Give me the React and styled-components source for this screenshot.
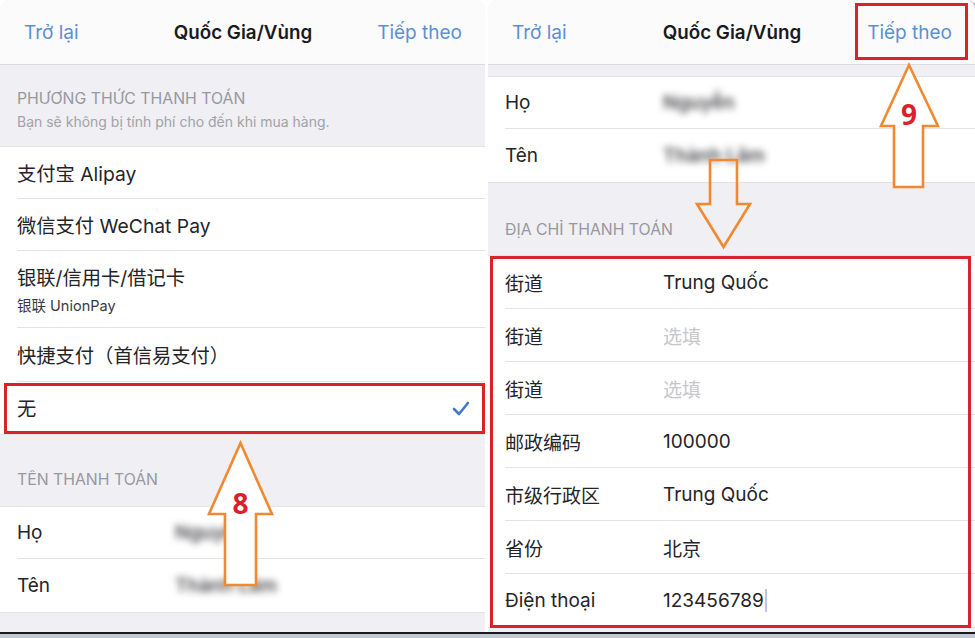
import React from 'react';
import styled, { createGlobalStyle, css } from 'styled-components';

const GlobalStyle = createGlobalStyle`
  html, body {
    margin: 0;
    padding: 0;
    background: #ffffff;
  }
  body {
    font-family: Inter, "Noto Sans", "Noto Sans CJK SC", sans-serif;
    -webkit-font-smoothing: antialiased;
  }
`;

const colors = {
  blue: '#5d8fd3',
  text: '#242428',
  grey: '#efeff4',
  header: '#98989e',
  line: '#e3e3e7',
  placeholder: '#c6c6cb',
  red: '#d8232a',
  orange: '#f0892f',
};

const redFrame = css`
  &::after {
    content: '';
    position: absolute;
    border: 3px solid ${colors.red};
    pointer-events: none;
  }
`;

const Page = styled.div`
  position: relative;
  width: 975px;
  height: 638px;
  display: flex;
  flex-direction: column;
  overflow: hidden;
  background: #ffffff;
`;

const Screens = styled.div`
  display: flex;
  gap: 3px;
  height: 632px;
  flex-shrink: 0;
`;

const Screen = styled.section`
  flex: 0 0 ${(p) => p.$width}px;
  display: flex;
  flex-direction: column;
  background: ${colors.grey};
  border-radius: 10px 10px 0 0;
  overflow: hidden;
  position: relative;
  ${(p) => p.$edge && `border-right: 2px solid #b9b9be;`}
`;

const BottomEdge = styled.div`
  flex: 1;
  border-top: 2px solid #1b1b1d;
  background: #c3c8d5;
`;

const NavBar = styled.header`
  height: 64px;
  flex-shrink: 0;
  display: grid;
  grid-template-columns: 1fr auto 1fr;
  align-items: center;
  padding: 0 23px 0 24px;
  background: #fbfbfc;
  border-bottom: 1px solid #dcdce0;
`;

const NavLink = styled.span`
  position: relative;
  font-size: 19px;
  color: ${colors.blue};
  justify-self: ${(p) => (p.$end ? 'end' : 'start')};
  ${(p) =>
    p.$highlight &&
    css`
      ${redFrame}
      &::after {
        top: -18px;
        bottom: -16px;
        left: -12px;
        right: -16px;
      }
    `}
`;

const NavTitle = styled.span`
  font-size: 18.8px;
  font-weight: 600;
  color: #1a1a1c;
`;

const Spacer = styled.div`
  height: ${(p) => p.$h}px;
  flex-shrink: 0;
`;

const SectionHeader = styled.div`
  padding: ${(p) => p.$top}px 17px ${(p) => p.$bottom}px;
  flex-shrink: 0;
`;

const SectionTitle = styled.div`
  font-size: 15.8px;
  line-height: 18px;
  color: ${colors.header};
  text-transform: uppercase;
`;

const SectionNote = styled.div`
  font-size: 14px;
  line-height: 16px;
  margin-top: 6px;
  color: #a2a2a7;
`;

const Group = styled.div`
  position: relative;
  flex-shrink: 0;
  background: #ffffff;
  border-top: 1px solid ${colors.line};
  border-bottom: 1px solid ${colors.line};
  ${(p) =>
    p.$highlight &&
    css`
      ${redFrame}
      &::after {
        top: 0;
        bottom: -1px;
        left: 2px;
        right: 4px;
      }
    `}
`;

const Row = styled.div`
  position: relative;
  box-sizing: border-box;
  height: ${(p) => p.$h || 52}px;
  margin-left: 17px;
  padding-right: 15px;
  display: flex;
  flex-direction: ${(p) => (p.$stack ? 'column' : 'row')};
  justify-content: ${(p) => (p.$stack ? 'center' : 'flex-start')};
  align-items: ${(p) => (p.$stack ? 'flex-start' : 'center')};
  gap: ${(p) => (p.$stack ? '3px' : '0')};
  border-bottom: 1px solid ${colors.line};

  &:last-child {
    border-bottom: none;
  }

  ${(p) =>
    p.$highlight &&
    css`
      ${redFrame}
      &::after {
        top: 1px;
        bottom: 0;
        left: -13px;
        right: 0;
      }
    `}
`;

const RowText = styled.span`
  font-size: 19.3px;
  color: ${colors.text};
  flex: ${(p) => (p.$fixed ? 'none' : 1)};
`;

const RowSub = styled.span`
  font-size: 14.5px;
  color: #3a3a3e;
`;

const Label = styled.span`
  width: 158px;
  flex-shrink: 0;
  font-size: 19px;
  color: ${colors.text};
`;

const Value = styled.span`
  font-size: 19px;
  color: ${(p) => (p.$placeholder ? colors.placeholder : colors.text)};
  display: flex;
  align-items: center;
  ${(p) =>
    p.$blur &&
    css`
      color: #4a4a4e;
      font-weight: 600;
      filter: blur(3.5px);
    `}
`;

const Caret = styled.span`
  display: inline-block;
  width: 2px;
  height: 23px;
  margin-left: 1px;
  background: #b9c4e6;
`;

const Fill = styled.div`
  flex: 1;
`;

const Overlay = styled.svg`
  position: absolute;
  left: 0;
  top: 0;
  pointer-events: none;
`;

function Check() {
  return (
    <svg width="18" height="15" viewBox="0 0 18 15">
      <polyline
        points="2,8 7,13 16,2"
        fill="none"
        stroke="#4079cc"
        strokeWidth="2.6"
        strokeLinecap="round"
        strokeLinejoin="round"
      />
    </svg>
  );
}

function Nav({ highlightNext }) {
  return (
    <NavBar>
      <NavLink>Trở lại</NavLink>
      <NavTitle>Quốc Gia/Vùng</NavTitle>
      <NavLink $end $highlight={highlightNext}>
        Tiếp theo
      </NavLink>
    </NavBar>
  );
}

const addressRows = [
  { label: '街道', value: 'Trung Quốc' },
  { label: '街道', value: '选填', placeholder: true },
  { label: '街道', value: '选填', placeholder: true },
  { label: '邮政编码', value: '100000' },
  { label: '市级行政区', value: 'Trung Quốc' },
  { label: '省份', value: '北京' },
  { label: 'Điện thoại', value: '123456789', caret: true },
];

function NameGroup() {
  return (
    <Group>
      <Row>
        <Label>Họ</Label>
        <Value $blur>Nguyễn</Value>
      </Row>
      <Row $h={53}>
        <Label>Tên</Label>
        <Value $blur>Thành Lâm</Value>
      </Row>
    </Group>
  );
}

function PaymentScreen() {
  return (
    <Screen $width={485}>
      <Nav />
      <SectionHeader $top={25} $bottom={16}>
        <SectionTitle>Phương thức thanh toán</SectionTitle>
        <SectionNote>Bạn sẽ không bị tính phí cho đến khi mua hàng.</SectionNote>
      </SectionHeader>
      <Group>
        <Row>
          <RowText>支付宝 Alipay</RowText>
        </Row>
        <Row>
          <RowText>微信支付 WeChat Pay</RowText>
        </Row>
        <Row $h={77} $stack>
          <RowText $fixed>银联/信用卡/借记卡</RowText>
          <RowSub>银联 UnionPay</RowSub>
        </Row>
        <Row $h={54}>
          <RowText>快捷支付（首信易支付）</RowText>
        </Row>
        <Row $highlight>
          <RowText>无</RowText>
          <Check />
        </Row>
      </Group>
      <SectionHeader $top={36} $bottom={17}>
        <SectionTitle>Tên thanh toán</SectionTitle>
      </SectionHeader>
      <NameGroup />
      <Fill />
    </Screen>
  );
}

function AddressScreen() {
  return (
    <Screen $width={487} $edge>
      <Nav highlightNext />
      <Spacer $h={11} />
      <NameGroup />
      <SectionHeader $top={38} $bottom={16}>
        <SectionTitle>Địa chỉ thanh toán</SectionTitle>
      </SectionHeader>
      <Group $highlight>
        {addressRows.map((r, i) => (
          <Row key={i} $h={53}>
            <Label>{r.label}</Label>
            <Value $placeholder={r.placeholder}>
              {r.value}
              {r.caret && <Caret />}
            </Value>
          </Row>
        ))}
      </Group>
      <Fill />
    </Screen>
  );
}

function Arrows() {
  const stroke = { stroke: colors.orange, strokeWidth: 2.6, strokeLinejoin: 'miter' };
  const digit = {
    fill: '#dc1f2b',
    fontFamily: '"Open Sans", "Liberation Sans", sans-serif',
    fontWeight: 700,
    fontSize: 28,
    textAnchor: 'middle',
  };
  return (
    <Overlay width="975" height="638" viewBox="0 0 975 638">
      <path d="M240.5 443 L272 514 L256 514 L256 585 L225 585 L225 514 L209 514 Z" fill="#ffffff" {...stroke} />
      <text x="240.5" y="514" {...digit}>8</text>
      <path d="M909 65 L938 126 L923 126 L923 187 L894 187 L894 126 L881 126 Z" fill="#ffffff" {...stroke} />
      <text x="909" y="125" {...digit}>9</text>
      <path d="M710 160 L737 160 L737 204 L750 204 L723.5 247 L697 204 L710 204 Z" fill="none" {...stroke} />
    </Overlay>
  );
}

export default function App() {
  return (
    <Page>
      <GlobalStyle />
      <Screens>
        <PaymentScreen />
        <AddressScreen />
      </Screens>
      <BottomEdge />
      <Arrows />
    </Page>
  );
}
